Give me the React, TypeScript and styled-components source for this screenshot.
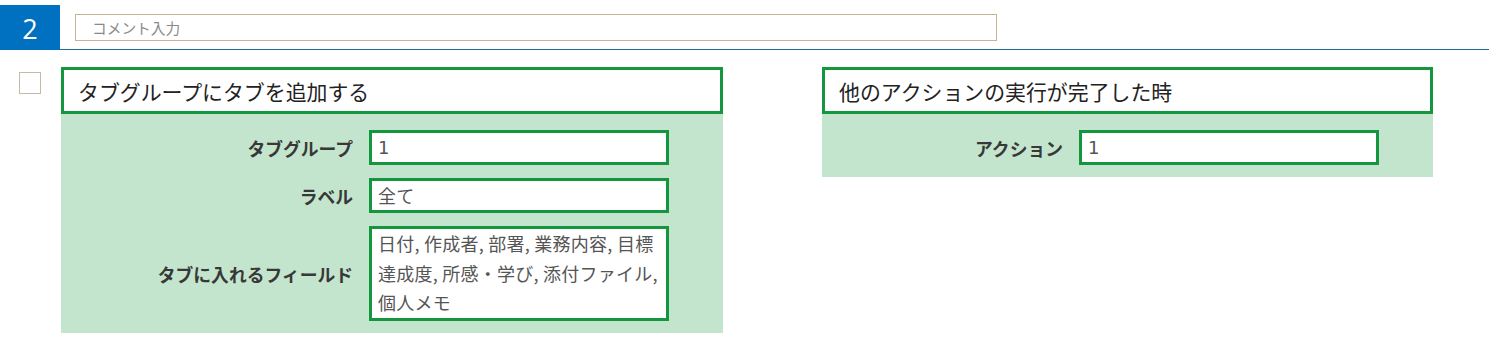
import React from "react";
import styled, { createGlobalStyle } from "styled-components";

const Global = createGlobalStyle`
  html, body { margin: 0; padding: 0; background: #fff; }
  body { font-family: "Noto Sans CJK JP", "Noto Sans", sans-serif; color: #222; }
  * { box-sizing: border-box; }
`;

const GREEN = "#14963f";

const Header = styled.div`
  display: flex;
  align-items: flex-start;
  height: 50px;
  padding-top: 5px;
  border-bottom: 1px solid #1f6b9e;
  margin-right: 2px;
`;

const StepBadge = styled.div`
  width: 60px;
  height: 45px;
  background: #0070c0;
  color: #fff;
  font-family: "Open Sans", "Noto Sans", sans-serif;
  font-size: 27px;
  display: flex;
  align-items: center;
  justify-content: center;
  padding-top: 2px;
`;

const CommentBox = styled.div`
  margin-left: 15px;
  margin-top: 9px;
  width: 922px;
  height: 27px;
  border: 1px solid #c9b395;
  padding-left: 16px;
  display: flex;
  align-items: center;
  font-size: 14.7px;
  color: #8a8a8a;
`;

const Main = styled.div`
  display: flex;
  align-items: flex-start;
  padding-top: 17px;
`;

const Checkbox = styled.div`
  width: 22px;
  height: 22px;
  margin-left: 19px;
  margin-top: 5px;
  border: 1px solid #c8b9a6;
  background: #fff;
  flex: none;
`;

const Card = styled.div<{ $w: number; $ml: number }>`
  width: ${(p) => p.$w}px;
  margin-left: ${(p) => p.$ml}px;
  flex: none;
`;

const CardTitle = styled.div`
  height: 47px;
  border: 3px solid ${GREEN};
  padding-left: 14px;
  display: flex;
  align-items: center;
  font-size: 20.9px;
  color: #222;
  background: #fff;
`;

const CardBody = styled.div`
  background: #c4e5cd;
  padding: 16px 54px 12px 0;
  display: flex;
  flex-direction: column;
  gap: 13px;
`;

const Row = styled.div`
  display: flex;
  align-items: center;
  gap: 16px;
`;

const Label = styled.div`
  flex: 1;
  text-align: right;
  font-weight: 700;
  font-size: 17.8px;
  color: #383838;
`;

const Field = styled.div<{ $multi?: boolean }>`
  width: 300px;
  flex: none;
  background: #fff;
  border: 3px solid ${GREEN};
  height: ${(p) => (p.$multi ? "95px" : "35px")};
  padding: 0 0 0 6px;
  font-family: "DejaVu Sans", "Noto Sans CJK JP", sans-serif;
  font-size: 18px;
  color: #555;
  line-height: ${(p) => (p.$multi ? "29.7px" : "29px")};
  white-space: pre;
  overflow: hidden;
`;

const MultiText = styled.div`
  font-family: "Noto Sans CJK JP", sans-serif;
  font-size: 18px;
  letter-spacing: 0.25px;
`;

export default function App() {
  return (
    <>
      <Global />
      <Header>
        <StepBadge>2</StepBadge>
        <CommentBox>コメント入力</CommentBox>
      </Header>
      <Main>
        <Checkbox />
        <Card $w={662} $ml={20}>
          <CardTitle>タブグループにタブを追加する</CardTitle>
          <CardBody>
            <Row>
              <Label>タブグループ</Label>
              <Field>1</Field>
            </Row>
            <Row>
              <Label>ラベル</Label>
              <Field>
                <MultiText>全て</MultiText>
              </Field>
            </Row>
            <Row>
              <Label>タブに入れるフィールド</Label>
              <Field $multi>
                <MultiText>
                  {"日付, 作成者, 部署, 業務内容, 目標\n達成度, 所感・学び, 添付ファイル,\n個人メモ"}
                </MultiText>
              </Field>
            </Row>
          </CardBody>
        </Card>
        <Card $w={611} $ml={99}>
          <CardTitle>他のアクションの実行が完了した時</CardTitle>
          <CardBody>
            <Row>
              <Label>アクション</Label>
              <Field>1</Field>
            </Row>
          </CardBody>
        </Card>
      </Main>
    </>
  );
}
